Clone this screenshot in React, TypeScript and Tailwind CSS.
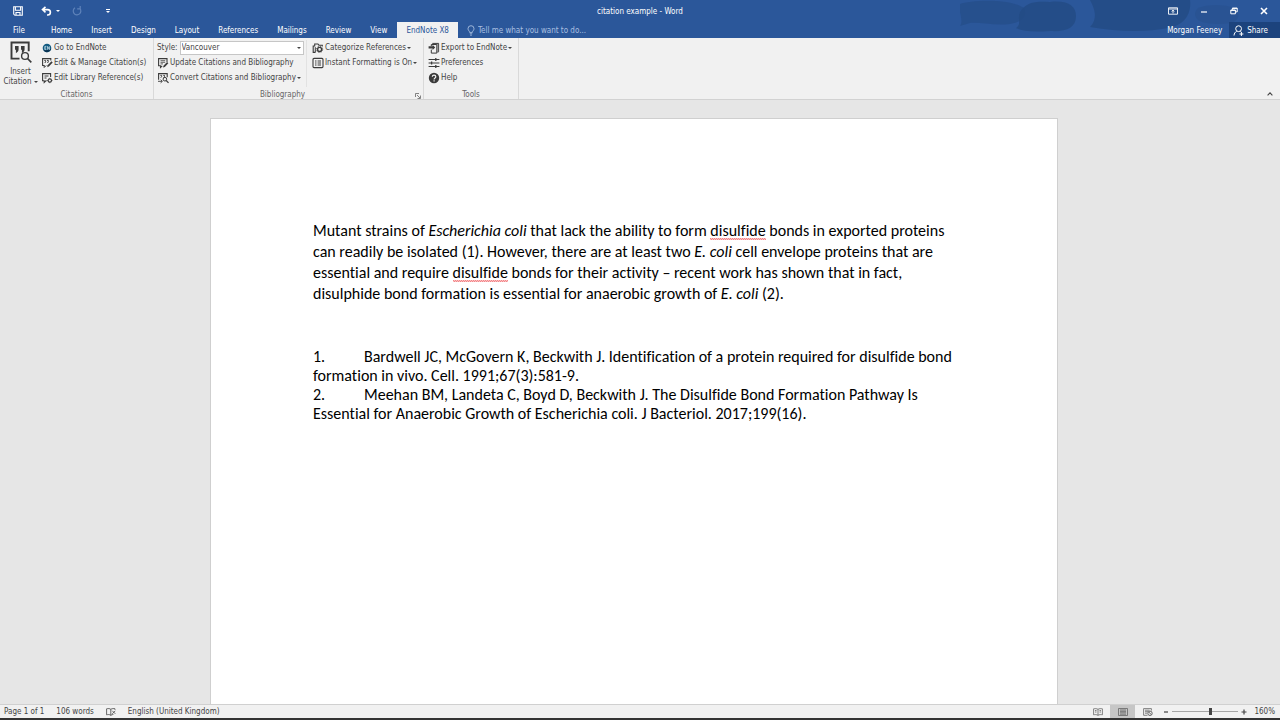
import type { ReactNode } from "react";

const INK = "#3b3b3b";

type IconProps = { children: ReactNode; box?: string; className?: string };

function Icon({ children, box = "0 0 12 12", className = "size-3" }: IconProps) {
  return (
    <svg viewBox={box} className={"shrink-0 " + className} fill="none" stroke="currentColor" strokeWidth="1" aria-hidden="true">
      {children}
    </svg>
  );
}

function Caret({ className = "" }: { className?: string }) {
  return (
    <svg viewBox="0 0 4 2" className={"h-[2px] w-1 shrink-0 " + className} fill="currentColor" aria-hidden="true">
      <path d="M0 0h4L2 2z" />
    </svg>
  );
}

const icons = {
  endnote: (
    <Icon>
      <circle cx="6" cy="6" r="4.3" fill="#125a80" stroke="none" />
      <path d="M2.5 8.3A4.3 4.3 0 0 0 10.2 7z" fill="#0a3454" stroke="none" />
      <path d="M5.4 4.4H3.8v3.2h1.6M3.8 6h1.4M6.6 7.8V4.4l1.8 3.2V4.3" stroke="#d9ecf5" strokeWidth=".7" />
    </Icon>
  ),
  editCite: (
    <Icon>
      <path d="M3.2 8.5H1.6V1.6h8.2v2" stroke={INK} strokeWidth="1.1" />
      <path d="M3.3 3.4h1.3v1.4L3.8 6M6 3.4h1.3v1.4L6.5 6" stroke={INK} />
      <path d="m6.2 10.2.4-1.9 3.9-4 1.2 1.2-3.8 4z" fill={INK} stroke="none" />
      <path d="M3.2 8v2.5l2-2" stroke={INK} />
    </Icon>
  ),
  editLib: (
    <Icon>
      <path d="M9.6 5V1.6H1.6v7.2h1.6v1.6l1.7-1.6h.8" stroke={INK} strokeWidth="1.1" />
      <path d="M3.5 4h4M3.5 6h2" stroke={INK} />
      <circle cx="8.8" cy="8.5" r="1.7" stroke={INK} strokeWidth="1.2" />
      <path d="M8.8 5.8v5.4M6.1 8.5h5.4" stroke={INK} strokeWidth=".7" strokeDasharray="1.1 3.2" />
    </Icon>
  ),
  update: (
    <Icon>
      <path d="M10 5V1.6H1.6v7.2h1.9v1.6l1.7-1.6" stroke={INK} strokeWidth="1.1" />
      <path d="M3.5 3.7h4.7M3.5 5.3h4.7M3.5 6.9h2.5" stroke={INK} strokeWidth=".8" />
      <path d="m6 10.5.5-1.8 3.6-3.6 1.2 1.2-3.5 3.6z" fill={INK} stroke="none" />
    </Icon>
  ),
  convert: (
    <Icon>
      <path d="M1.6 7.8V1.6h8.6v3.6" stroke={INK} strokeWidth="1.1" />
      <path d="M3.4 3.4h1.2v1.3l-.8 1M6.3 3.4h1.2v1.3l-.8 1" stroke={INK} />
      <path d="M1 9.3h4M3.6 7.7l1.8 1.6-1.8 1.6" stroke={INK} strokeWidth=".9" />
      <circle cx="7.9" cy="7.2" r="1.8" stroke={INK} />
      <path d="m9.2 8.5 2.3 2.4" stroke={INK} strokeWidth="1.2" />
    </Icon>
  ),
  categorize: (
    <Icon>
      <path d="M3.4 10.4H1.2V4h1.5V2h3.2l1 1.2h3.4v1.3" stroke={INK} strokeWidth="1.1" />
      <path d="M3.3 10.4V5.2" stroke={INK} />
      <circle cx="7.6" cy="7.4" r="2" stroke={INK} strokeWidth="1.4" />
      <circle cx="7.6" cy="7.4" r="3.1" stroke={INK} strokeWidth=".9" strokeDasharray="1.2 1.23" />
    </Icon>
  ),
  instant: (
    <Icon>
      <rect x="1" y="1.4" width="10" height="9.2" rx="1" stroke={INK} strokeWidth="1.1" />
      <path d="M3 4h1.5M3 6h1.5M3 8h1.5M5.6 4H9M5.6 6H9M5.6 8H9" stroke={INK} />
    </Icon>
  ),
  exportTo: (
    <Icon>
      <path d="M4.3 1.4h6.3v8.4H8.8" stroke={INK} />
      <path d="M3.3 2.5h5.5v8.6H3.3V7.6M3.3 2.5v1.7" stroke={INK} />
      <path d="M9.7 2v8.6" stroke="#8a8a8a" />
      <path d="M.6 4.2h4V2.8l2.6 2.6L4.6 8V6.6h-4z" fill={INK} stroke="none" />
    </Icon>
  ),
  prefs: (
    <Icon>
      <path d="M.6 2.5h10.8M.6 6h10.8M.6 9.5h10.8" stroke={INK} strokeWidth="1.1" />
      <path d="M7.8 1v3M3.6 4.5v3M7.8 8v3" stroke={INK} strokeWidth="1.3" />
    </Icon>
  ),
  help: (
    <Icon>
      <circle cx="6" cy="6" r="5.2" fill={INK} stroke="none" />
      <path d="M4.3 4.8c0-2.3 3.5-2.2 3.5-.1C7.8 6 6.1 6 6.1 7.4M6.1 8.3v1.2" stroke="#f1f1f1" strokeWidth="1.2" />
    </Icon>
  ),
};

function Command({ icon, label, menu }: { icon: ReactNode; label: string; menu?: boolean }) {
  return (
    <button type="button" className="flex h-[15px] items-center gap-px whitespace-nowrap">
      {icon}
      <span className="pt-px">{label}</span>
      {menu && <Caret />}
    </button>
  );
}

function Group({ title, children, className = "" }: { title: string; children: ReactNode; className?: string }) {
  const launcher = title === "Bibliography";
  return (
    <section aria-label={title} className={"flex flex-col border-r border-[#d9d9d9] pt-[2px] " + className}>
      <div className="flex h-[51px]">{children}</div>
      <div className={"relative text-center leading-2 text-[#666] " + (launcher ? "pr-3" : "")}>
        {title}
        {launcher && (
          <button type="button" aria-label="Bibliography settings" className="absolute right-[2px] bottom-0 flex">
            <Icon box="0 0 6 6" className="size-[6px]">
              <path d="M.5 4V.5H4M2 2l3 3M5.5 2.5v3h-3" stroke="#666" strokeWidth=".8" />
            </Icon>
          </button>
        )}
      </div>
    </section>
  );
}

const tabs = ["Home", "Insert", "Design", "Layout", "References", "Mailings", "Review", "View"];

function Backdrop() {
  return (
    <svg viewBox="0 0 320 38" className="absolute top-0 right-0 h-full w-80" aria-hidden="true">
      <g fill="#234b85">
        <path d="M0 4C10 0 50-2 64 8c4 8-2 14-14 16-16 2-30-2-40-1L0 26c4-6-2-14 0-22z" opacity=".6" />
        <path d="M60 12C66 2 76 1 90 2c18-2 26 4 26 14 0 12-10 16-26 15-14 1-26 1-34-3 6-4 1-8 4-16z" opacity=".85" />
        <path d="M130 0h100c2 16-8 26-22 28-20 4-50 4-78-1 8-8 5-18 0-27z" opacity=".85" />
        <path d="M238 8c10-4 26-4 36 0 8 6 4 14-4 15-10 2-26 1-32-3-4-4-4-8 0-12z" opacity=".3" />
      </g>
    </svg>
  );
}

function TitleBar() {
  return (
    <div className="relative grid h-[22px] grid-cols-3 items-center pb-px text-white">
      <div className="flex items-center">
        <button type="button" aria-label="Save" className="ml-[13px] flex">
          <Icon box="0 0 10 10" className="size-[10px]">
            <path d="M.7.7h8.6v8.6H1.9L.7 8.1zM2.4.9v3.4h5.2V.9M3 9.2V6.5h4v2.7" strokeWidth="1.1" />
          </Icon>
        </button>
        <button type="button" aria-label="Undo" className="ml-[18px] flex items-center gap-1">
          <Icon box="0 0 11 10" className="h-[10px] w-[11px]">
            <path d="M1.5 3.6h5.2a2.7 2.7 0 0 1 0 5.4H6M4.5.8 1.5 3.6l3 2.8" strokeWidth="1.6" />
          </Icon>
          <Caret />
        </button>
        <button type="button" aria-label="Repeat" className="ml-3 flex text-[#5f83ba]">
          <Icon box="0 0 10 10" className="size-[10px]">
            <path d="M7.7 2.3A3.8 3.8 0 1 1 3 1.8M5.2 2.9h3V0" strokeWidth="1.2" />
          </Icon>
        </button>
        <button type="button" aria-label="Customize Quick Access Toolbar" className="ml-6 flex flex-col items-center gap-px">
          <span className="h-px w-1 bg-white" />
          <Caret />
        </button>
      </div>
      <h1 className="pt-[2px] text-center">citation example - Word</h1>
      <div className="flex items-center justify-end gap-[22px] pr-3">
        <button type="button" aria-label="Ribbon Display Options" className="flex">
          <Icon box="0 0 10 8" className="h-2 w-[10px]">
            <path d="M.5.8h9v6.4h-9zM.5 2h9M5 6.4V3.2M3.6 4.5 5 3.2l1.4 1.3" strokeWidth=".9" />
          </Icon>
        </button>
        <button type="button" aria-label="Minimize" className="flex">
          <Icon box="0 0 8 8" className="size-2"><path d="M1 5h6" strokeWidth="1.2" /></Icon>
        </button>
        <button type="button" aria-label="Restore" className="flex">
          <Icon box="0 0 8 8" className="size-2">
            <path d="M.8 3h4.6v3.8H.8zM2.4 2.8V1.1h4.8v3.8H5.6M.8 3.4h4.6M2.4 1.4h4.8" />
          </Icon>
        </button>
        <button type="button" aria-label="Close" className="flex">
          <Icon box="0 0 8 8" className="size-2"><path d="m1 1 6 6M7 1 1 7" strokeWidth="1.6" /></Icon>
        </button>
      </div>
    </div>
  );
}

function TabRow() {
  return (
    <nav aria-label="Ribbon tabs" className="relative flex h-4 items-stretch text-white">
      <div className="flex gap-px">
        <button type="button" className="w-[41px] pt-px pr-[3px]">File</button>
        {tabs.map((t) => (
          <button key={t} type="button" className="px-[9px] pt-px">{t}</button>
        ))}
        <button type="button" aria-current="page" className="bg-[#f1f1f1] px-[9px] pt-px text-[#2b579a]">EndNote X8</button>
      </div>
      <label className="ml-[9px] flex flex-1 items-center gap-[3px] text-[#a9bfe0]">
        <Icon box="0 0 8 11" className="h-[11px] w-2">
          <path d="M2.6 7.4C2.6 6 1 5.4 1 3.7a3 3 0 0 1 6 0c0 1.7-1.6 2.3-1.6 3.7zM2.8 8.8h2.4M3.2 10.2h1.6" strokeWidth=".9" />
        </Icon>
        <input aria-label="Tell me what you want to do" className="h-4 w-40 bg-transparent placeholder:text-[#a9bfe0] placeholder:opacity-100" placeholder="Tell me what you want to do..." />
      </label>
      <button type="button" className="px-[7px] pt-px">Morgan Feeney</button>
      <button type="button" className="flex items-center gap-[3px] bg-[#1c437d] pr-3 pl-1">
        <Icon box="0 0 11 11" className="size-[11px]">
          <circle cx="5.6" cy="3.7" r="2.9" />
          <path d="M1 10.5c.2-2.2 1.2-3.5 2.7-4.2M7.3 6.2l1 .7M8.4 7v4M6.4 9h4" />
        </Icon>
        <span className="pt-px">Share</span>
      </button>
    </nav>
  );
}

function Ribbon() {
  return (
    <div className="flex h-[62px] border-b border-[#d2d2d2] bg-[#f1f1f1] text-[#444]">
      <Group title="Citations" className="w-[154px]">
        <button type="button" className="flex w-[41px] flex-col items-center pt-px">
          <svg viewBox="0 0 22 22" className="size-[22px]" fill="none" stroke={INK} aria-hidden="true">
            <path d="M9.5 17.6H1.5V1.5h17.2v8.8" strokeWidth="1.9" />
            <path d="M5 5h3.6v3.3c0 1.6-.9 2.9-2.7 3.9V8.8H5zM11 5h3.6v3.3c0 1.6-.9 2.9-2.7 3.9V8.8H11z" fill={INK} stroke="none" />
            <circle cx="15" cy="15" r="3.4" fill="#f1f1f1" strokeWidth="1.4" />
            <path d="m17.5 17.5 3.8 3.8" strokeWidth="1.7" />
          </svg>
          <span className="mt-1 leading-[10px]">Insert</span>
          <span className="flex items-center gap-[2px] leading-[10px]">Citation <Caret /></span>
        </button>
        <div className="flex flex-col">
          <Command icon={icons.endnote} label="Go to EndNote" />
          <Command icon={icons.editCite} label="Edit & Manage Citation(s)" />
          <Command icon={icons.editLib} label="Edit Library Reference(s)" />
        </div>
      </Group>
      <Group title="Bibliography" className="w-[270px]">
        <div className="flex w-[150px] flex-col pl-[3px]">
          <label className="flex h-[15px] items-center gap-[2px]">
            <span className="pt-px">Style:</span>
            <span className="grid flex-1 items-center">
              <select defaultValue="Vancouver" className="col-start-1 row-start-1 h-[14px] appearance-none border border-[#c6c6c6] bg-white px-px leading-3">
                <option>Vancouver</option>
              </select>
              <Caret className="pointer-events-none relative col-start-1 row-start-1 mr-[3px] justify-self-end" />
            </span>
          </label>
          <Command icon={icons.update} label="Update Citations and Bibliography" />
          <Command icon={icons.convert} label="Convert Citations and Bibliography" menu />
        </div>
        <div className="mb-1 ml-[2px] flex flex-col border-l border-[#e2e2e2] pl-[5px]">
          <Command icon={icons.categorize} label="Categorize References" menu />
          <Command icon={icons.instant} label="Instant Formatting is On" menu />
        </div>
      </Group>
      <Group title="Tools" className="w-[95px]">
        <div className="flex flex-col pl-1">
          <Command icon={icons.exportTo} label="Export to EndNote" menu />
          <Command icon={icons.prefs} label="Preferences" />
          <Command icon={icons.help} label="Help" />
        </div>
      </Group>
      <div className="flex flex-1 items-end justify-end pr-[7px] pb-[3px]">
        <button type="button" aria-label="Collapse the Ribbon" className="flex">
          <Icon box="0 0 6 4" className="h-1 w-[6px]"><path d="m.6 3.3 2.4-2.4 2.4 2.4" strokeWidth="1.1" /></Icon>
        </button>
      </div>
    </div>
  );
}

function Misspelt({ children }: { children: ReactNode }) {
  return (
    <span className="bg-[conic-gradient(#ee4a4e_25%,transparent_0_50%,#ee4a4e_0_75%,transparent_0)] bg-[length:2px_2px] bg-bottom bg-repeat-x">
      {children}
    </span>
  );
}

function Document() {
  return (
    <main className="flex flex-1 justify-center overflow-hidden bg-[#e6e6e6] pt-[18px] pr-3">
      <article className="w-[848px] border border-b-0 border-[#cfcfcf] bg-white pt-[101px] pl-[102px] font-[Carlito,Lato,sans-serif] text-[16px] whitespace-nowrap text-black [font-variant-ligatures:none]">
        <p className="leading-[21px]">
          Mutant strains of <i>Escherichia coli</i> that lack the ability to form <Misspelt>disulfide</Misspelt> bonds in exported proteins<br />
          can readily be isolated (1). However, there are at least two <i>E. coli</i> cell envelope proteins that are<br />
          essential and require <Misspelt>disulfide</Misspelt> bonds for their activity – recent work has shown that in fact,<br />
          disulphide bond formation is essential for anaerobic growth of <i>E. coli</i> (2).
        </p>
        <div className="mt-[43px] leading-[19px]">
          <p>
            <span className="inline-block w-[51px]">1.</span>Bardwell JC, McGovern K, Beckwith J. Identification of a protein required for disulfide bond<br />
            formation in vivo. Cell. 1991;67(3):581-9.
          </p>
          <p>
            <span className="inline-block w-[51px]">2.</span>Meehan BM, Landeta C, Boyd D, Beckwith J. The Disulfide Bond Formation Pathway Is<br />
            Essential for Anaerobic Growth of Escherichia coli. J Bacteriol. 2017;199(16).
          </p>
        </div>
      </article>
    </main>
  );
}

function StatusBar() {
  return (
    <footer className="flex h-4 items-stretch border-t border-b-2 border-t-[#d0d0d0] border-b-[#333] bg-[#f1f1f1] pl-1 text-[#444]">
      <div className="flex flex-1 items-center gap-3">
        <span className="pt-px">Page 1 of 1</span>
        <span className="pt-px">106 words</span>
        <button type="button" aria-label="Proofing errors" className="flex">
          <Icon box="0 0 10 8" className="h-2 w-[10px]">
            <path d="M4.8 7.3C3.5 6.3 2 6.5.6 6.8V.8c1.5-.4 3-.4 4.2.5zM4.8 1.3C6 .5 7.5.4 9 .8v1M4.8 7.3c.9-.6 1.7-.8 2.6-.8M6.3 2.8l3 3M9.3 2.8l-3 3" strokeWidth=".8" />
          </Icon>
        </button>
        <span className="pt-px">English (United Kingdom)</span>
      </div>
      <button type="button" aria-label="Read Mode" className="flex w-[25px] items-center justify-center">
        <Icon box="0 0 10 8" className="h-2 w-[10px]">
          <path d="M5 7.3C3.6 6.5 2 6.5.6 6.8V.8C2 .5 3.6.5 5 1.3 6.4.5 8 .5 9.4.8v6C8 6.5 6.4 6.5 5 7.3zM5 1.3v6M2 2.5h1.5M2 4h1.5M6.5 2.5H8M6.5 4H8" stroke="#666" strokeWidth=".8" />
        </Icon>
      </button>
      <button type="button" aria-label="Print Layout" aria-pressed="true" className="flex w-[25px] items-center justify-center bg-[#c6c6c6]">
        <Icon box="0 0 10 8" className="h-2 w-[10px]">
          <path d="M.5.5h9v7h-9zM2 2h6M2 3.4h6M2 4.8h6M2 6.2h6" stroke="#666" strokeWidth=".8" />
        </Icon>
      </button>
      <button type="button" aria-label="Web Layout" className="flex w-[25px] items-center justify-center">
        <Icon box="0 0 10 8" className="h-2 w-[10px]">
          <path d="M4.5 7.3H.6V.6h7.8v2M2 2.2h4.5M2 3.7h3M2 5.2h2" stroke="#666" strokeWidth=".8" />
          <circle cx="7" cy="5.3" r="2.2" stroke="#666" />
          <path d="m5.5 3.8 3 3" stroke="#666" />
        </Icon>
      </button>
      <div className="ml-[3px] flex items-center gap-[3px]">
        <button type="button" aria-label="Zoom out" className="flex"><Icon box="0 0 6 6" className="size-[6px]"><path d="M1 3h4" strokeWidth="1.2" /></Icon></button>
        <input
          type="range"
          aria-label="Zoom"
          min={0}
          max={100}
          defaultValue={59}
          className="h-[9px] w-[66px] appearance-none bg-[linear-gradient(#a6a6a6,#a6a6a6)] bg-[length:100%_1px] bg-center bg-no-repeat [&::-webkit-slider-thumb]:h-[7px] [&::-webkit-slider-thumb]:w-[3px] [&::-webkit-slider-thumb]:appearance-none [&::-webkit-slider-thumb]:bg-[#444]"
        />
        <button type="button" aria-label="Zoom in" className="flex"><Icon box="0 0 6 6" className="size-[6px]"><path d="M.5 3h5M3 .5v5" strokeWidth="1.2" /></Icon></button>
      </div>
      <span className="flex w-[33px] items-center justify-end pt-px pr-[5px]">160%</span>
    </footer>
  );
}

export default function App() {
  return (
    <div className="flex h-screen flex-col overflow-hidden font-['DejaVu_Sans_Condensed','Noto_Sans',sans-serif] text-[8px] leading-3">
      <header>
        <div className="relative bg-[#2b579a]">
          <Backdrop />
          <TitleBar />
          <TabRow />
        </div>
        <Ribbon />
      </header>
      <Document />
      <StatusBar />
    </div>
  );
}
